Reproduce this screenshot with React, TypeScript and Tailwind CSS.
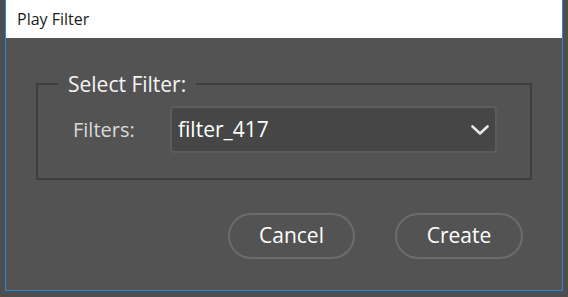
const font = { fontFamily: '"Open Sans", "Noto Sans", sans-serif' };

function Chevron() {
  return (
    <svg width="18" height="10" viewBox="0 0 18 10" fill="none">
      <polyline
        points="1.5,1.5 9,8.5 16.5,1.5"
        stroke="#e6e6e6"
        strokeWidth="2.6"
        strokeLinecap="round"
        strokeLinejoin="round"
      />
    </svg>
  );
}

export default function App() {
  return (
    <div
      className="w-[568px] h-[297px] overflow-hidden bg-[#4e4e4e] pl-[5px]"
      style={font}
    >
      <div className="w-[558px] h-[291px] flex flex-col border-x border-b border-[#2a86d8]">
        <div className="h-[38px] bg-white flex items-center pl-[11px] pb-[1px]">
          <span className="text-[16px] text-[#1b1b1b]">Play Filter</span>
        </div>

        <div className="flex-1 bg-[#535353] flex flex-col">
          <fieldset className="mx-[30px] mt-[33px] h-[109px] border-2 border-[#3e3e3e] px-[20px]">
            <legend className="px-[10px] text-[21px] leading-[26px] text-[#f5f5f5]">
              Select Filter:
            </legend>
            <div className="flex items-center mt-[9px] pl-[15px]">
              <span className="w-[97px] text-[20px] text-[#dadada]">
                Filters:
              </span>
              <div className="w-[327px] h-[47px] rounded-[4px] border-2 border-[#5c5c5c] bg-[#464646] flex items-center justify-between pl-[6px] pr-[6px]">
                <span className="text-[21px] text-white">filter_417</span>
                <Chevron />
              </div>
            </div>
          </fieldset>

          <div className="flex justify-end gap-[40px] pr-[39px] mt-[33px]">
            <button className="w-[127px] h-[46px] rounded-full border-2 border-[#6c6c6c] text-[21px] text-white">
              Cancel
            </button>
            <button className="w-[128px] h-[46px] rounded-full border-2 border-[#6c6c6c] text-[21px] text-white">
              Create
            </button>
          </div>
        </div>
      </div>
    </div>
  );
}
